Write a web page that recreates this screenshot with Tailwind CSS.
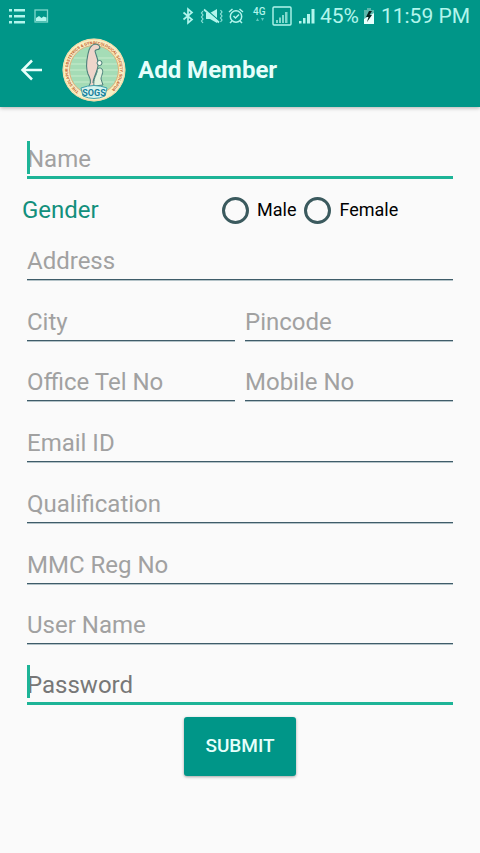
<!DOCTYPE html>
<html lang="en">
<head>
<meta charset="utf-8">
<meta name="viewport" content="width=device-width, initial-scale=1">
<title>Add Member</title>
<script src="https://cdn.jsdelivr.net/npm/@tailwindcss/browser@4"></script>
</head>
<body class="flex min-h-screen flex-col bg-[#fafafa] font-[Roboto,sans-serif] text-black">
<header class="z-10 bg-[#009688] shadow-[0_1px_4px_rgba(0,0,0,0.3)]">
  <div class="flex h-8 items-center justify-between pr-[10px] pl-2 text-[#b2f5ec]">
    <div class="flex items-center gap-2">
      <svg class="h-4 w-[18px]" viewBox="0 0 18 16" fill="currentColor" aria-hidden="true"><path d="M1 1h3v2.500H1zM6 1h11v2.500H6zM1 7h3v2.500H1zM6 7h11v2.500H6zM1 13h3v2.500H1zM6 13h11v2.500H6z"/></svg>
      <svg class="h-4 w-[15px]" viewBox="0 0 15 16" aria-hidden="true"><rect x="1" y="2" width="12.500" height="12" fill="none" stroke="#7fd8cc" stroke-width="1.300"/><path d="M2 13V10l3-2 2.500 2 2-1.500 3 1V13z" fill="currentColor"/></svg>
    </div>
    <div class="flex items-center">
      <svg class="mr-1.5 h-[18px] w-3" viewBox="0 0 12 18" fill="none" stroke="currentColor" stroke-width="1.700" aria-hidden="true"><path d="M1.500 5.500l8.500 7-4 3.500V2l4 3.500-8.500 7"/></svg>
      <svg class="mr-1 h-[18px] w-6" viewBox="0 0 24 18" aria-hidden="true"><path d="M6 6h4l7-4v14l-7-4H6z" fill="currentColor"/><path d="M5 1.500l15 13" stroke="#009688" stroke-width="1.200"/><path d="M4 2.500l15 13" stroke="currentColor" stroke-width="1.800"/><path d="M3 4L1.500 6 3 8l-1.500 2L3 12l-1.500 2L3 16M20.500 3L22 5l-1.500 2L22 9l-1.500 2 1.500 2-1.500 2" fill="none" stroke="currentColor" stroke-width="1.200" opacity=".8"/></svg>
      <svg class="mr-2 h-[18px] w-4" viewBox="0 0 16 18" fill="none" stroke="currentColor" stroke-width="1.500" aria-hidden="true"><circle cx="8" cy="9.500" r="5.700"/><path d="M1 5l3.500-3M15 5l-3.500-3M5.500 9l2 2 3.500-3.500M4 14l-2 2M12 14l2 2"/></svg>
      <svg class="mr-1 h-5 w-4" viewBox="0 0 16 20" fill="currentColor" aria-hidden="true"><text x="1" y="9" font-size="10" font-weight="500">4G</text><path d="M4 15h3l-1.500-3zM9 12h3l-1.500 3z" opacity=".55"/></svg>
      <svg class="mr-1.5 h-5 w-5" viewBox="0 0 20 20" aria-hidden="true"><rect x="1" y="1" width="18" height="18" rx="1" fill="none" stroke="currentColor" stroke-width="1.400"/><path d="M4 14h2v3H4zM7 11.500h2V17H7zM10 9h2v8h-2zM13 6h2.500v11H13z" fill="#7fd8cc"/></svg>
      <svg class="mr-1 h-5 w-[18px]" viewBox="0 0 18 20" fill="currentColor" aria-hidden="true"><path d="M1 15h2.500v2.500H1zM5 12h2.500v5.500H5zM9 8h3v9.500H9zM13.500 3h3v14.500h-3z"/></svg>
      <span class="text-[21px] leading-8">45%</span>
      <svg class="mx-1 h-[18px] w-3" viewBox="0 0 12 18" aria-hidden="true"><path d="M4 1h4v2h3v14H1V3h3z" fill="#5bb8ac"/><path d="M1 12L11 6v11H1z" fill="#e8fffc"/><path d="M6 4L3 10h2.500L4 15l5-7H6.500L9 4z" fill="#06231f"/></svg>
      <time class="ml-0.5 text-[21px] leading-8">11:59 PM</time>
    </div>
  </div>
  <div class="flex h-[75px] items-center">
    <button type="button" aria-label="Back" class="ml-5 h-6 w-6 text-[#e6fffb]">
      <svg viewBox="0 0 24 24" fill="none" stroke="currentColor" stroke-width="2.500" aria-hidden="true"><path d="M22 12H3M12 2.500L2.500 12l9.500 9.500"/></svg>
    </button>
    <svg class="mr-3 ml-[18px] h-16 w-16" viewBox="0 0 64 64" aria-hidden="true">
      <circle cx="32" cy="32" r="31.500" fill="#f8efc4"/>
      <circle cx="32" cy="32" r="30.800" fill="none" stroke="#efcf98" stroke-width=".7"/>
      <circle cx="32" cy="32" r="24.500" fill="#a5dcb6" stroke="#e0b07a" stroke-width="1"/>
      <path d="M12 20h40M9 26h46M8 32h48M9 38h46M12 44h40" stroke="#bce6c5" stroke-width="1.500"/>
      <path id="ring" d="M17 53.500A26 26 0 1 1 47 53.500" fill="none"/>
      <text font-size="4" font-weight="700" fill="#c6602f"><textPath href="#ring">THE SOLAPUR OBSTETRICS &amp; GYNAECOLOGICAL SOCIETY, SOLAPUR</textPath></text>
      <path d="M27 48c3-4 1-8-1-12-3-8-1-15 0-20 1-6 3-9 7-10 4 0 6 3 4 5-1 1-3 0-4 2 1 5 4 9 3 15-1 7-5 12-3 20z" fill="#efd5cb"/>
      <path d="M27 48c3-4 1-8-1-12-3-8-1-15 0-20 1-6 3-9 7-10 4 0 6 3 4 5-1 1-3 0-4 2 1 5 4 9 3 15-1 7-5 12-5 17" fill="none" stroke="#4b7f7b" stroke-width="1.100"/>
      <path d="M32 48c-1-7 2-10 3-14 0-4 3-5 5-3 2 3-1 7-1 10l2 6z" fill="#e3f2df" stroke="#4b7f7b" stroke-width="1"/>
      <circle cx="37.500" cy="25" r="2.500" fill="#f4fbef" stroke="#4b7f7b"/>
      <path d="M19 50q13-5 26 0l-2 8q-11 5-22 0z" fill="#d6f4ee" stroke="#40a2ad" stroke-width="1"/>
      <text x="32" y="57.500" text-anchor="middle" font-size="9" font-weight="700" fill="#167e9b">SOGS</text>
    </svg>
    <h1 class="text-2xl font-bold text-[#e6fffb]">Add Member</h1>
  </div>
</header>
<form class="flex flex-1 flex-col px-[27px]">
  <div class="relative mt-7 h-11 border-b-[3px] border-[#1db497]">
    <span class="absolute top-1.5 left-0 h-[33px] w-[3px] bg-[#1db497]"></span>
    <input type="text" aria-label="Name" placeholder="Name" class="h-full w-full pt-1.5 text-2xl outline-none placeholder:text-[#a1a1a1]">
  </div>
  <fieldset aria-labelledby="gender-label" class="-ml-[5px] flex h-10 items-center pt-[15px]">
    <span id="gender-label" class="w-[200px] text-2xl text-[#128f7c]">Gender</span>
    <label class="mr-2 flex items-center gap-2 text-lg"><input type="radio" name="gender" class="h-[27px] w-[27px] appearance-none rounded-full border-[3px] border-[#3b5a5e]">Male</label>
    <label class="flex items-center gap-2 text-lg"><input type="radio" name="gender" class="h-[27px] w-[27px] appearance-none rounded-full border-[3px] border-[#3b5a5e]">Female</label>
  </fieldset>
  <div class="grid flex-1 auto-rows-fr grid-cols-2 gap-x-[10px]">
    <input type="text" aria-label="Address" placeholder="Address" class="col-span-2 min-h-14 w-full min-w-0 border-b border-[#3f5c69] pt-6 text-2xl shadow-[0_1px_0_#b4c3c8] outline-none placeholder:text-[#a1a1a1]">
    <input type="text" aria-label="City" placeholder="City" class="min-h-14 w-full min-w-0 border-b border-[#3f5c69] pt-6 text-2xl shadow-[0_1px_0_#b4c3c8] outline-none placeholder:text-[#a1a1a1]">
    <input type="text" aria-label="Pincode" placeholder="Pincode" class="min-h-14 w-full min-w-0 border-b border-[#3f5c69] pt-6 text-2xl shadow-[0_1px_0_#b4c3c8] outline-none placeholder:text-[#a1a1a1]">
    <input type="tel" aria-label="Office Tel No" placeholder="Office Tel No" class="min-h-14 w-full min-w-0 border-b border-[#3f5c69] pt-6 text-2xl shadow-[0_1px_0_#b4c3c8] outline-none placeholder:text-[#a1a1a1]">
    <input type="tel" aria-label="Mobile No" placeholder="Mobile No" class="min-h-14 w-full min-w-0 border-b border-[#3f5c69] pt-6 text-2xl shadow-[0_1px_0_#b4c3c8] outline-none placeholder:text-[#a1a1a1]">
    <input type="email" aria-label="Email ID" placeholder="Email ID" class="col-span-2 min-h-14 w-full min-w-0 border-b border-[#3f5c69] pt-6 text-2xl shadow-[0_1px_0_#b4c3c8] outline-none placeholder:text-[#a1a1a1]">
    <input type="text" aria-label="Qualification" placeholder="Qualification" class="col-span-2 min-h-14 w-full min-w-0 border-b border-[#3f5c69] pt-6 text-2xl shadow-[0_1px_0_#b4c3c8] outline-none placeholder:text-[#a1a1a1]">
    <input type="text" aria-label="MMC Reg No" placeholder="MMC Reg No" class="col-span-2 min-h-14 w-full min-w-0 border-b border-[#3f5c69] pt-6 text-2xl shadow-[0_1px_0_#b4c3c8] outline-none placeholder:text-[#a1a1a1]">
    <input type="text" aria-label="User Name" placeholder="User Name" class="col-span-2 min-h-14 w-full min-w-0 border-b border-[#3f5c69] pt-6 text-2xl shadow-[0_1px_0_#b4c3c8] outline-none placeholder:text-[#a1a1a1]">
    <div class="relative col-span-2 min-h-14 border-b-[3px] border-[#1db497]">
      <span class="absolute bottom-1 left-0 h-[33px] w-[3px] bg-[#1db497]"></span>
      <input type="password" aria-label="Password" placeholder="Password" class="h-full w-full pt-6 text-2xl outline-none placeholder:text-[#777]">
    </div>
  </div>
  <button type="submit" class="mx-auto mt-3 mb-[77px] h-[59px] w-28 rounded-[3px] bg-[#009688] text-[19px] font-medium text-[#e6fffb] shadow-[0_1px_3px_rgba(0,0,0,0.35)]">SUBMIT</button>
</form>
</body>
</html>
